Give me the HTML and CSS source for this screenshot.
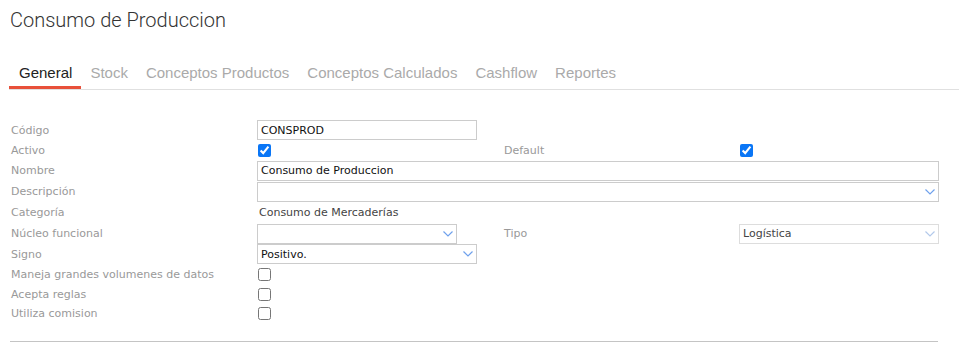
FILE: index.html
```html
<!DOCTYPE html>
<html lang="es">
<head>
    <meta charset="UTF-8">
    <meta name="viewport" content="width=device-width, initial-scale=1.0">
    <title>Consumo de Produccion</title>
    <link rel="stylesheet" href="styles.css">
</head>
<body>

<div class="page">
    <h1 class="title">Consumo de Produccion</h1>

    <ul class="tabs">
        <li class="tab active">General</li>
        <li class="tab">Stock</li>
        <li class="tab">Conceptos Productos</li>
        <li class="tab">Conceptos Calculados</li>
        <li class="tab">Cashflow</li>
        <li class="tab">Reportes</li>
    </ul>

    <form class="form-grid">
        <!-- Código -->
        <label class="label">Código</label>
        <div class="field"><input class="text-input short" type="text" value="CONSPROD"></div>
        <div></div><div></div>

        <!-- Activo / Default -->
        <label class="label">Activo</label>
        <div class="field"><input class="check" type="checkbox" checked></div>
        <label class="label">Default</label>
        <div class="field"><input class="check" type="checkbox" checked></div>

        <!-- Nombre -->
        <label class="label">Nombre</label>
        <div class="field wide"><input class="text-input full" type="text" value="Consumo de Produccion"></div>

        <!-- Descripción -->
        <label class="label">Descripción</label>
        <div class="field wide">
            <div class="select full">
                <span class="select-value"></span>
                <svg class="chevron" width="10" height="6" viewBox="0 0 10 6"><path d="M0.5 0.5 L5 5 L9.5 0.5" fill="none" stroke="currentColor" stroke-width="1.2"/></svg>
            </div>
        </div>

        <!-- Categoría -->
        <label class="label">Categoría</label>
        <div class="field"><span class="static-value">Consumo de Mercaderías</span></div>
        <div></div><div></div>

        <!-- Núcleo funcional / Tipo -->
        <label class="label">Núcleo funcional</label>
        <div class="field">
            <div class="select medium">
                <span class="select-value"></span>
                <svg class="chevron" width="10" height="6" viewBox="0 0 10 6"><path d="M0.5 0.5 L5 5 L9.5 0.5" fill="none" stroke="currentColor" stroke-width="1.2"/></svg>
            </div>
        </div>
        <label class="label">Tipo</label>
        <div class="field">
            <div class="select medium disabled">
                <span class="select-value">Logística</span>
                <svg class="chevron" width="10" height="6" viewBox="0 0 10 6"><path d="M0.5 0.5 L5 5 L9.5 0.5" fill="none" stroke="currentColor" stroke-width="1.2"/></svg>
            </div>
        </div>

        <!-- Signo -->
        <label class="label">Signo</label>
        <div class="field">
            <div class="select short">
                <span class="select-value">Positivo.</span>
                <svg class="chevron" width="10" height="6" viewBox="0 0 10 6"><path d="M0.5 0.5 L5 5 L9.5 0.5" fill="none" stroke="currentColor" stroke-width="1.2"/></svg>
            </div>
        </div>
        <div></div><div></div>

        <!-- Checks -->
        <label class="label">Maneja grandes volumenes de datos</label>
        <div class="field"><input class="check" type="checkbox"></div>
        <div></div><div></div>

        <label class="label">Acepta reglas</label>
        <div class="field"><input class="check" type="checkbox"></div>
        <div></div><div></div>

        <label class="label">Utiliza comision</label>
        <div class="field"><input class="check" type="checkbox"></div>
        <div></div><div></div>
    </form>

    <div class="footer-line"></div>
</div>

</body>
</html>
```

FILE: styles.css
```css
body {
    margin: 0;
    background: #fff;
    font-family: "DejaVu Sans", Verdana, sans-serif;
    font-size: 11px;
    color: #000;
}

.page {
    padding: 8px 21px 0 10px;
}

.title {
    margin: 0;
    font-family: Roboto, "Liberation Sans", sans-serif;
    font-weight: 300;
    font-size: 20px;
    line-height: 24px;
    color: #333;
}

/* tabs */
.tabs {
    display: flex;
    list-style: none;
    margin: 32px -21px 0 -1px;
    padding: 0;
    border-bottom: 1px solid #e0e0e0;
}

.tab {
    padding: 0 9px 5px 9px;
    font-family: "Liberation Sans", Arial, sans-serif;
    font-size: 15px;
    line-height: 17px;
    color: #aaa;
    border-bottom: 3px solid transparent;
}

.tab.active {
    color: #222;
    padding: 0 9px 5px 10px;
    border-bottom-color: #e8503a;
}

/* form */
.form-grid {
    display: grid;
    grid-template-columns: 247px 246px 236px 200px;
    grid-template-rows: 20px 20px repeat(4, 21px) 20px 20px 20px 18px;
    margin-top: 30px;
}

.label {
    display: flex;
    align-items: center;
    padding-left: 1px;
    color: #999;
    white-space: nowrap;
}

.field {
    display: flex;
    align-items: center;
}

.field.wide {
    grid-column: 2 / span 3;
}

.text-input {
    box-sizing: border-box;
    height: 20px;
    padding: 0 3px;
    border: 1px solid #ccc;
    border-radius: 0;
    font-family: inherit;
    font-size: 11px;
    color: #111;
    outline: none;
}

.short {
    width: 220px;
}

.medium {
    width: 200px;
}

.full {
    width: 682px;
}

.check {
    margin: 0 0 0 1px;
    width: 13px;
    height: 13px;
    accent-color: #0a76f6;
}

.select {
    box-sizing: border-box;
    height: 20px;
    display: flex;
    align-items: center;
    justify-content: space-between;
    padding: 0 3px 0 3px;
    border: 1px solid #ccc;
}

.select-value {
    color: #111;
}

.chevron {
    color: #6fa1ec;
}

.select.disabled {
    border-color: #ddd;
}

.select.disabled .select-value {
    color: #444;
}

.select.disabled .chevron {
    color: #b3c9ea;
}

.static-value {
    padding-left: 2px;
    color: #444;
}

.footer-line {
    margin-top: 19px;
    height: 1px;
    background: #c4c4c4;
}
```
